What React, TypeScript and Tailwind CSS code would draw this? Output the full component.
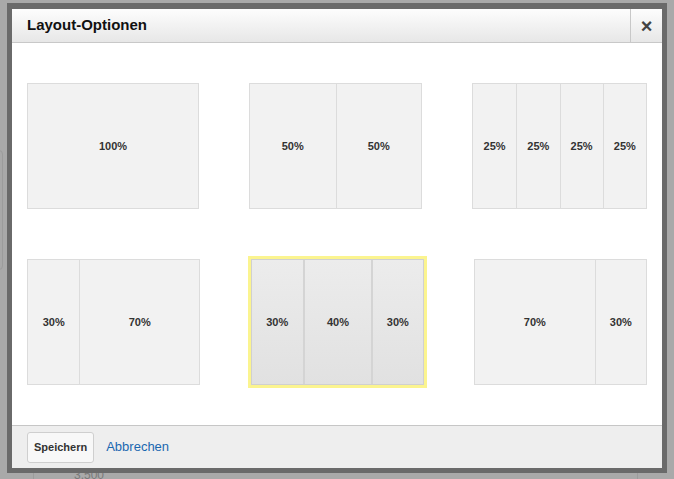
import React from 'react'

type Layout = { cols: number[]; w: number; selected?: boolean }

const rows: Layout[][] = [
  [
    { cols: [100], w: 172 },
    { cols: [50, 50], w: 173 },
    { cols: [25, 25, 25, 25], w: 175 },
  ],
  [
    { cols: [30, 70], w: 173 },
    { cols: [30, 40, 30], w: 173, selected: true },
    { cols: [70, 30], w: 173 },
  ],
]

function Tile({ layout }: { layout: Layout }) {
  const inner = (
    <div
      className={
        'flex h-[126px] border ' +
        (layout.selected
          ? 'border-[#d0d0d0] bg-gradient-to-b from-[#ececec] to-[#e1e1e1]'
          : 'border-[#dcdcdc] bg-[#f2f2f2]')
      }
      style={{ width: layout.w }}
    >
      {layout.cols.map((c, i) => (
        <div
          key={i}
          className={
            'flex items-center justify-center text-[11px] font-bold text-[#333] ' +
            (i > 0 ? (layout.selected ? 'border-l-2 border-[#d4d4d4]' : 'border-l border-[#dcdcdc]') : '')
          }
          style={{ flexBasis: c + '%', flexGrow: 0, flexShrink: 0 }}
        >
          {c}%
        </div>
      ))}
    </div>
  )
  if (layout.selected) {
    return <div className="border-[3px] border-[#fbf48f]">{inner}</div>
  }
  return inner
}

export default function App() {
  return (
    <div
      className="relative h-[479px] w-[674px] overflow-hidden bg-[#a9a9a9] pl-[7px] pt-[3px]"
      style={{ fontFamily: '"Liberation Sans", Arial, sans-serif' }}
    >
      <div className="absolute bottom-0 left-[33px] h-[8px] w-[605px] border-x border-[#9c9c9c]" />
      <div className="absolute bottom-[-5px] left-[74px] text-[12px] text-[#7a7a7a]">3.500</div>
      <div className="absolute left-[-4px] top-[150px] h-[120px] w-[7px] rounded-r border border-[#9c9c9c]" />

      <div className="relative w-[660px] border-[5px] border-t-[6px] border-[#6a6a6a] bg-white">
        <div className="flex h-[34px] items-stretch border-b border-[#c8c8c8] bg-gradient-to-b from-[#fdfdfd] to-[#e7e7e7]">
          <div className="flex flex-1 items-center pl-[15px] text-[15px] font-bold text-[#111]">
            Layout-Optionen
          </div>
          <div className="flex w-[32px] items-center justify-center border-l border-[#c8c8c8] text-[20px] font-bold leading-none text-[#444]">
            ×
          </div>
        </div>

        <div className="flex h-[382px] flex-col gap-[47px] px-[15px] pt-[40px]">
          {rows.map((row, r) => (
            <div key={r} className="flex items-center justify-between">
              {row.map((l, i) => (
                <Tile key={i} layout={l} />
              ))}
            </div>
          ))}
        </div>

        <div className="flex h-[43px] items-center gap-[12px] border-t border-[#c6c6c6] bg-[#eeeeee] pl-[15px]">
          <button className="h-[31px] rounded-[3px] border border-[#cfcfcf] bg-[#f8f8f8] px-[6px] text-[11px] font-bold text-[#333]">
            Speichern
          </button>
          <span className="text-[13px] text-[#1a67b0]">Abbrechen</span>
        </div>
      </div>
    </div>
  )
}
